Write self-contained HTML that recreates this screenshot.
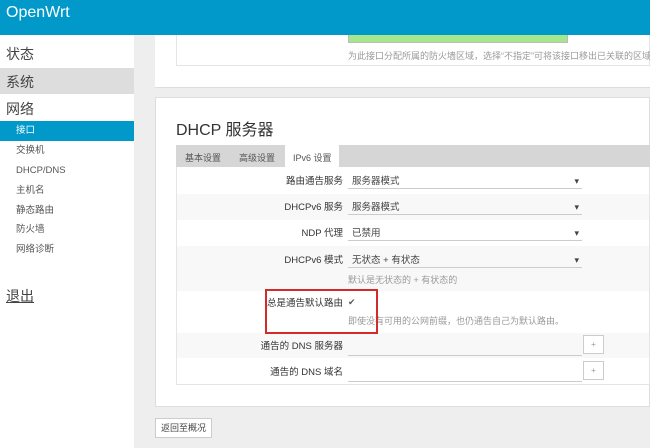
<!DOCTYPE html>
<html><head><meta charset="utf-8"><style>
*{margin:0;padding:0;box-sizing:border-box}
body{width:650px;height:448px;overflow:hidden;background:#eee;font-family:"Liberation Sans","Noto Sans CJK SC",sans-serif;position:relative;color:#333}
.a{position:absolute}
#hd{left:0;top:0;width:650px;height:35px;background:#0199c9}
#hd span{position:absolute;left:6px;top:3px;color:#fff;font-size:16px;line-height:20px}
#sb{left:0;top:35px;width:134px;height:413px;background:#fff}
.m{position:absolute;left:6px;font-size:14px;color:#444;line-height:18px}
.s{position:absolute;left:16px;font-size:9.5px;color:#555;line-height:12px}
.lab{position:absolute;right:307px;font-size:9.5px;color:#333;text-align:right;white-space:nowrap;line-height:12px}
.sel{position:absolute;left:348px;width:234px;height:18px;border-bottom:1px solid #ccc;font-size:9.5px;padding:5px 4px 0;color:#444;line-height:12px}
.sel:after{content:"▾";position:absolute;right:3px;top:4px;font-size:9px}
.hint{position:absolute;left:348px;font-size:9px;color:#999;white-space:nowrap;line-height:11px}
</style></head><body>
<div class="a" id="hd"><span>OpenWrt</span></div>
<div class="a" id="sb"></div>
<div class="m" style="top:45px">状态</div>
<div class="a" style="left:0;top:68px;width:134px;height:26px;background:#ddd"></div>
<div class="m" style="top:73px">系统</div>
<div class="m" style="top:100px">网络</div>
<div class="a" style="left:0;top:121px;width:134px;height:20px;background:#0199c9"></div>
<div class="s" style="top:125px;color:#fff">接口</div>
<div class="s" style="top:145px">交换机</div>
<div class="s" style="top:165px">DHCP/DNS</div>
<div class="s" style="top:185px">主机名</div>
<div class="s" style="top:205px">静态路由</div>
<div class="s" style="top:224px">防火墙</div>
<div class="s" style="top:244px">网络诊断</div>
<div class="m" style="top:287px;text-decoration:underline">退出</div>
<div class="a" style="left:155px;top:35px;width:495px;height:53px;background:#fff;border-bottom:1px solid #ddd"></div>
<div class="a" style="left:176px;top:35px;width:474px;height:31px;border:1px solid #e5e5e5;border-top:none"></div>
<div class="a" style="left:348px;top:35px;width:220px;height:8px;background:#a6e68c;border:1px solid #bbb;border-top:none"></div>
<div class="hint" style="top:51px">为此接口分配所属的防火墙区域，选择“不指定”可将该接口移出已关联的区域</div>
<div class="a" style="left:155px;top:97px;width:495px;height:310px;background:#fff;border:1px solid #ddd"></div>
<div class="a" style="left:176px;top:121px;font-size:16px;color:#333;line-height:20px">DHCP 服务器</div>
<div class="a" style="left:176px;top:145px;width:474px;height:240px;border:1px solid #e5e5e5;border-top:none"></div>
<div class="a" style="left:176px;top:145px;width:474px;height:22px;background:#d6d6d6"></div>
<div class="a" style="left:285px;top:145px;width:54px;height:22px;background:#fff"></div>
<div class="a" style="left:185px;top:151px;font-size:9px;color:#555">基本设置</div>
<div class="a" style="left:239px;top:151px;font-size:9px;color:#555">高级设置</div>
<div class="a" style="left:293px;top:151px;font-size:9px;color:#555">IPv6 设置</div>
<div class="a" style="left:177px;top:194px;width:472px;height:26px;background:#f8f8f8"></div>
<div class="a" style="left:177px;top:246px;width:472px;height:45px;background:#f8f8f8"></div>
<div class="a" style="left:177px;top:333px;width:472px;height:25px;background:#f8f8f8"></div>
<div class="lab" style="top:176px">路由通告服务</div><div class="sel" style="top:171px">服务器模式</div>
<div class="lab" style="top:202px">DHCPv6 服务</div><div class="sel" style="top:197px">服务器模式</div>
<div class="lab" style="top:228px">NDP 代理</div><div class="sel" style="top:223px">已禁用</div>
<div class="lab" style="top:255px">DHCPv6 模式</div><div class="sel" style="top:250px">无状态 + 有状态</div>
<div class="hint" style="top:275px">默认是无状态的 + 有状态的</div>
<div class="lab" style="top:298px">总是通告默认路由</div>
<div class="a" style="left:348px;top:297px;font-size:9px;color:#555">✔</div>
<div class="hint" style="top:316px">即使没有可用的公网前缀，也仍通告自己为默认路由。</div>
<div class="a" style="left:265px;top:289px;width:113px;height:45px;border:2px solid #d42a2a"></div>
<div class="lab" style="top:341px">通告的 DNS 服务器</div>
<div class="a" style="left:348px;top:355px;width:234px;border-bottom:1px solid #ccc"></div>
<div class="a" style="left:583px;top:335px;width:21px;height:19px;border:1px solid #ccc;background:#fff;font-size:8px;color:#999;text-align:center;line-height:17px">+</div>
<div class="lab" style="top:367px">通告的 DNS 域名</div>
<div class="a" style="left:348px;top:381px;width:234px;border-bottom:1px solid #ccc"></div>
<div class="a" style="left:583px;top:361px;width:21px;height:19px;border:1px solid #ccc;background:#fff;font-size:8px;color:#999;text-align:center;line-height:17px">+</div>
<div class="a" style="left:155px;top:418px;width:57px;height:20px;border:1px solid #ccc;background:#fff;font-size:9px;color:#444;text-align:center;line-height:18px">返回至概况</div>
</body></html>
